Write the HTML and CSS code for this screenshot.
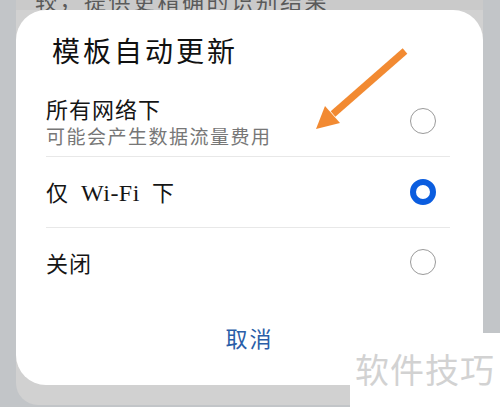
FILE: index.html
```html
<!DOCTYPE html>
<html lang="zh-CN">
<head>
  <meta charset="UTF-8" />
  <meta name="viewport" content="width=device-width, initial-scale=1.0" />
  <title>模板自动更新</title>
  <link rel="stylesheet" href="styles.css">
</head>
<body>
  <div class="page">
    <div class="screen">
      <div class="bg-text"><span>较，提供更精确的识别结果</span></div>

      <div class="dialog">
        <div class="dialog-title">模板自动更新</div>

        <div class="option-list">
          <div class="option">
            <div class="option-text">
              <div class="option-name">所有网络下</div>
              <div class="option-desc">可能会产生数据流量费用</div>
            </div>
            <span class="radio"></span>
          </div>
          <div class="option">
            <div class="option-text">
              <div class="option-name">仅<span class="latin">Wi-Fi</span>下</div>
            </div>
            <span class="radio checked"></span>
          </div>
          <div class="option">
            <div class="option-text">
              <div class="option-name">关闭</div>
            </div>
            <span class="radio"></span>
          </div>
        </div>

        <div class="cancel">取消</div>
      </div>
    </div>

    <!-- 标注箭头 -->
    <svg class="arrow" width="500" height="407" viewBox="0 0 500 407">
      <line x1="405" y1="51" x2="333" y2="114" stroke="#f28a32" stroke-width="7" />
      <polygon points="316,129 340,123 325,106" fill="#f28a32" />
    </svg>

    <div class="watermark">软件技巧</div>
  </div>
</body>
</html>
```

FILE: styles.css
```css
body {
  margin: 0;
  padding: 0;
  font-family: "Noto Sans CJK SC", sans-serif;
}

.page {
  position: relative;
  width: 500px;
  height: 407px;
  overflow: hidden;
  background: #c2c5c8;
}

.screen {
  margin-left: 16px;
  width: 467px;
  height: 405px;
  background: #d1d1d1;
  border-bottom-left-radius: 22px;
}

.bg-text {
  height: 10px;
  overflow: hidden;
  display: flex;
  align-items: flex-end;
  padding-left: 19px;
  background: #cacaca;
  font-size: 22px;
  line-height: 22px;
  letter-spacing: 2.5px;
  color: #5a5a5a;
}

.dialog {
  height: 375px;
  box-sizing: border-box;
  padding: 20px 33px 0 30px;
  background: #ffffff;
  border-radius: 30px;
  display: flex;
  flex-direction: column;
}

.dialog-title {
  padding-left: 6px;
  font-size: 28px;
  line-height: 40px;
  letter-spacing: 3px;
  color: #111;
  margin-bottom: 18px;
}

.option {
  display: flex;
  align-items: center;
  justify-content: space-between;
  border-bottom: 1px solid #e8e8e8;
}

.option:first-child {
  padding: 5px 0 7px;
}

.option:nth-child(2) {
  height: 70px;
}

.option:last-child {
  height: 68px;
  border-bottom: none;
}

.option-name {
  font-size: 22px;
  line-height: 30px;
  letter-spacing: 1px;
  color: #151515;
}

.option-name .latin {
  margin: 0 12px;
  font-family: "Liberation Serif", serif;
  font-size: 24px;
  letter-spacing: 0.5px;
}

.option-desc {
  font-size: 19px;
  line-height: 26px;
  letter-spacing: 1.5px;
  color: #777;
}

.radio {
  width: 24px;
  height: 24px;
  margin-right: 14px;
  border: 1.5px solid #9a9a9a;
  border-radius: 50%;
}

.radio.checked {
  width: 14px;
  height: 14px;
  border: 6.5px solid #0b5ddf;
}

.cancel {
  margin-top: 26px;
  text-align: center;
  padding-left: 3px;
  font-size: 22px;
  line-height: 30px;
  letter-spacing: 2px;
  color: #2a5ea8;
}

.arrow {
  position: absolute;
  left: 0;
  top: 0;
  pointer-events: none;
}

.watermark {
  position: absolute;
  left: 350px;
  top: 333px;
  width: 150px;
  height: 74px;
  box-sizing: border-box;
  padding: 14px 0 0 5px;
  background: #ffffff;
  font-size: 34px;
  line-height: 44px;
  letter-spacing: 1px;
  color: #d2d2d2;
}
```
